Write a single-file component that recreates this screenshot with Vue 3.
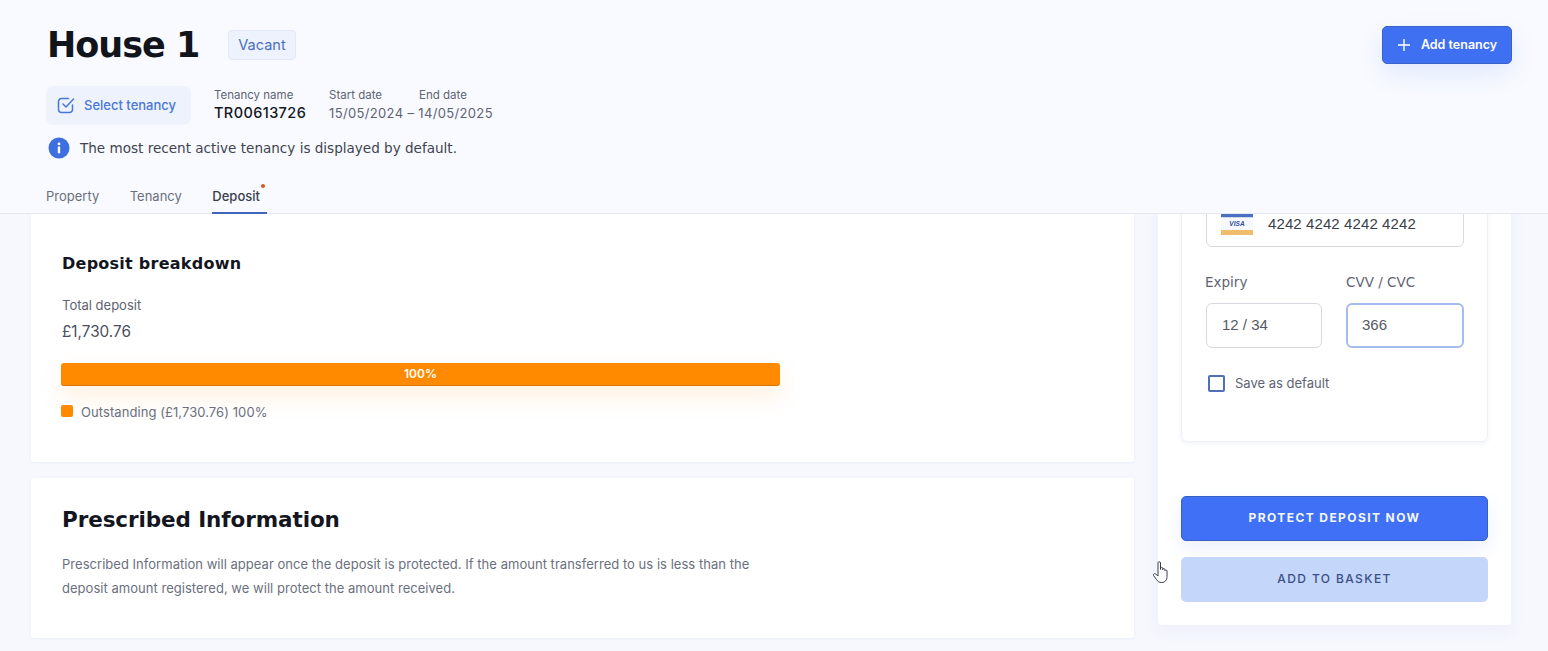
<script setup>
const tabs = [
  { label: 'Property', active: false },
  { label: 'Tenancy', active: false },
  { label: 'Deposit', active: true },
];
const paidPercent = 100;
</script>

<template>
  <div class="page">
    <header class="header">
      <div class="title-row">
        <div class="title-left">
          <h1 class="title">House 1</h1>
          <span class="badge">Vacant</span>
        </div>
        <button class="add-btn">
          <svg width="14" height="14" viewBox="0 0 14 14" fill="none" stroke="#fff" stroke-width="1.4">
            <path d="M7 1v12M1 7h12" />
          </svg>
          <span>Add tenancy</span>
        </button>
      </div>

      <div class="tenancy-row">
        <button class="select-btn">
          <svg width="18" height="18" viewBox="0 0 18 18" fill="none" stroke="#4a78d8" stroke-width="1.5" stroke-linecap="round" stroke-linejoin="round">
            <path d="M15.5 9v4.5a3 3 0 0 1-3 3h-8a3 3 0 0 1-3-3v-8a3 3 0 0 1 3-3h7" />
            <path d="M6 8l3 3 7.5-8" />
          </svg>
          <span>Select tenancy</span>
        </button>
        <div class="meta meta-name">
          <span class="meta-label">Tenancy name</span>
          <span class="meta-strong">TR00613726</span>
        </div>
        <div class="meta">
          <span class="date-labels"><span class="meta-label start-label">Start date</span><span class="meta-label">End date</span></span>
          <span class="meta-value">15/05/2024 – 14/05/2025</span>
        </div>
      </div>

      <div class="notice">
        <svg width="22" height="22" viewBox="0 0 22 22">
          <circle cx="11" cy="11" r="10.5" fill="#3d6fe0" />
          <rect x="9.8" y="9.6" width="2.4" height="6.6" rx="0.5" fill="#fff" />
          <circle cx="11" cy="6.9" r="1.4" fill="#fff" />
        </svg>
        <span>The most recent active tenancy is displayed by default.</span>
      </div>

      <nav class="tabs">
        <a v-for="tab in tabs" :key="tab.label" class="tab" :class="{ active: tab.active }">
          {{ tab.label }}
          <i v-if="tab.active" class="dot"></i>
        </a>
      </nav>
    </header>

    <main class="content">
      <div class="left">
        <section class="card breakdown">
          <h2 class="card-title">Deposit breakdown</h2>
          <div class="total-label">Total deposit</div>
          <div class="total-value">£1,730.76</div>
          <div class="bar">
            <div class="bar-fill" :style="{ width: paidPercent + '%' }">100%</div>
          </div>
          <div class="legend">
            <i class="swatch"></i>
            Outstanding (£1,730.76) 100%
          </div>
        </section>

        <section class="card prescribed">
          <h2 class="big-title">Prescribed Information</h2>
          <p class="copy">
            Prescribed Information will appear once the deposit is protected. If the amount transferred to us is less than the
            deposit amount registered, we will protect the amount received.
          </p>
        </section>
      </div>

      <aside class="right">
        <div class="panel">
          <div class="pay-card">
            <div class="field card-field">
              <svg class="visa" width="32" height="24" viewBox="0 0 32 24">
                <rect x="0" y="0" width="32" height="5.5" fill="#4a6fc0" />
                <rect x="0" y="5.5" width="32" height="12.5" fill="#f7f8fb" />
                <rect x="0" y="18" width="32" height="5" fill="#f0bd6c" />
                <text x="16" y="14" text-anchor="middle" font-size="6.5" font-weight="700" font-style="italic" font-family="Liberation Sans, sans-serif" fill="#2b4f9e">VISA</text>
              </svg>
              <span>4242 4242 4242 4242</span>
            </div>
            <div class="split">
              <div class="split-col">
                <label class="field-label">Expiry</label>
                <div class="field small">12 / 34</div>
              </div>
              <div class="split-col cvc">
                <label class="field-label">CVV / CVC</label>
                <div class="field small focused">366</div>
              </div>
            </div>
            <label class="save">
              <i class="check"></i>
              Save as default
            </label>
          </div>
          <button class="action primary">PROTECT DEPOSIT NOW</button>
          <button class="action secondary">ADD TO BASKET</button>
          <svg class="cursor" width="18" height="25" viewBox="0 0 18 25" fill="#fff" stroke="#3a3f4c" stroke-width="1" stroke-linejoin="round">
            <path d="M6 12V3a1.2 1.2 0 0 1 2.5 0v6.5l0-1a1.1 1.1 0 0 1 2.2 0v1.2a1.1 1.1 0 0 1 2.2 0v1a1.1 1.1 0 0 1 2.1.2v5.6c0 3.5-2 6-5.2 6-2.7 0-4-1-5.3-3L1.6 15.6c-.7-1.2.7-2.6 1.9-1.6L6 16z" />
          </svg>
        </div>
      </aside>
    </main>
  </div>
</template>

<style scoped>
.page {
  width: 1548px;
  height: 651px;
  overflow: hidden;
  background: #f6f8fe;
  font-family: Inter, Roboto, sans-serif;
  color: #14161f;
  display: flex;
  flex-direction: column;
}
.header {
  height: 214px;
  flex-shrink: 0;
  box-sizing: border-box;
  padding: 26px 36px 0 46px;
  border-bottom: 1px solid #e3e8f4;
  background: #f8faff;
}
.title-row {
  display: flex;
  justify-content: space-between;
  align-items: flex-start;
  height: 46px;
}
.title-left {
  display: flex;
  align-items: center;
  gap: 30px;
  padding-left: 1px;
}
.title {
  margin: 0;
  width: 151px;
  white-space: nowrap;
  font-family: "DejaVu Sans", Inter, sans-serif;
  font-size: 35px;
  line-height: 38px;
  font-weight: 700;
  letter-spacing: -1px;
  color: #12141c;
}
.badge {
  width: 68px;
  text-align: center;
  height: 30px;
  line-height: 27px;
  box-sizing: border-box;
  font-size: 14.5px;
  color: #4a6fc0;
  background: #edf2fd;
  border: 1px solid #e0e8fa;
  border-radius: 4px;
}
.add-btn {
  width: 130px;
  height: 38px;
  display: flex;
  align-items: center;
  justify-content: center;
  gap: 10px;
  border: 1px solid #3a62c8;
  border-radius: 5px;
  background: #3f70f2;
  color: #fff;
  font: 600 12.5px Inter, sans-serif;
  box-shadow: 0 10px 24px rgba(63, 112, 242, 0.12);
}
.add-btn span {
  margin-top: -2px;
}
.tenancy-row {
  display: flex;
  align-items: center;
  margin-top: 14px;
  height: 39px;
}
.select-btn {
  width: 145px;
  height: 39px;
  display: flex;
  align-items: center;
  gap: 9px;
  padding: 0 0 0 11px;
  border: none;
  border-radius: 7px;
  background: #edf2fd;
  color: #4a78d8;
  font: 500 13px Inter, sans-serif;
}
.select-btn span {
  margin-top: -1px;
}
.select-btn svg {
  margin-top: -1px;
}
.meta {
  display: flex;
  flex-direction: column;
  gap: 2px;
  margin-top: -1px;
}
.meta-name {
  margin-left: 23px;
  width: 115px;
}
.meta-label {
  font-size: 11.5px;
  line-height: 14px;
  color: #5e6473;
}
.date-labels {
  display: flex;
}
.start-label {
  width: 90px;
}
.meta-strong {
  font-size: 14.5px;
  line-height: 18px;
  font-weight: 500;
  letter-spacing: 0.4px;
  color: #15171f;
}
.meta-value {
  font-size: 13px;
  line-height: 18px;
  color: #5e6473;
  letter-spacing: 0.35px;
}
.notice {
  display: flex;
  align-items: center;
  gap: 10px;
  margin-top: 12px;
  padding-left: 2px;
  font-family: "DejaVu Sans", sans-serif;
  font-size: 13.55px;
  line-height: 22px;
  color: #3f4450;
}
.tabs {
  display: flex;
  gap: 30.5px;
  margin-top: 28px;
}
.tab {
  position: relative;
  font-size: 13px;
  line-height: 18px;
  padding-bottom: 7px;
  color: #6a707e;
}
.tab.active {
  font-weight: 500;
  color: #3a3f4c;
  padding-right: 7px;
  border-bottom: 2px solid #3f66b8;
  margin-right: -7px;
}
.dot {
  position: absolute;
  top: -3px;
  right: 2px;
  width: 4px;
  height: 4px;
  border-radius: 50%;
  background: #d9541e;
}
.content {
  flex: 1;
  min-height: 0;
  overflow: hidden;
  display: flex;
  gap: 24px;
  padding: 0 37px 0 31px;
}
.left {
  width: 1103px;
  flex-shrink: 0;
  display: flex;
  flex-direction: column;
  gap: 16px;
}
.card {
  background: #fff;
  box-sizing: border-box;
  padding-left: 31px;
  border-radius: 0 0 3px 3px;
  box-shadow: 0 1px 3px rgba(90, 110, 180, 0.08);
}
.breakdown {
  height: 248px;
  padding-top: 40px;
}
.card-title {
  margin: 0;
  font-family: "DejaVu Sans", Inter, sans-serif;
  font-size: 16px;
  line-height: 20px;
  font-weight: 700;
  letter-spacing: 0.25px;
  color: #14161f;
}
.total-label {
  margin-top: 23px;
  font-size: 13px;
  line-height: 16px;
  color: #5e6473;
}
.total-value {
  margin-top: 10px;
  font-size: 15.3px;
  line-height: 18px;
  color: #4a4f5c;
}
.bar {
  width: 719px;
  margin: 22px 0 0 -1px;
  height: 23px;
  border-radius: 3px;
  box-shadow: 0 10px 24px rgba(255, 140, 0, 0.14);
}
.bar-fill {
  height: 100%;
  border-radius: 3px;
  background: #ff8a00;
  box-shadow: inset 0 -1px 0 rgba(150, 90, 20, 0.4);
  color: #fff;
  font-size: 12px;
  font-weight: 600;
  line-height: 22px;
  text-align: center;
}
.legend {
  display: flex;
  align-items: center;
  gap: 8px;
  margin: 18px 0 0 -1px;
  font-size: 13px;
  line-height: 16px;
  letter-spacing: 0.07px;
  color: #6a707e;
}
.swatch {
  width: 12px;
  height: 12px;
  border-radius: 2px;
  background: #ff8a00;
  margin-top: -2px;
}
.prescribed {
  height: 160px;
  padding-top: 28px;
  border-radius: 3px;
}
.big-title {
  margin: 0;
  font-family: "DejaVu Sans", Inter, sans-serif;
  font-size: 21.5px;
  line-height: 28px;
  font-weight: 700;
  letter-spacing: -0.1px;
  color: #14161f;
}
.copy {
  width: 705px;
  margin: 18px 0 0;
  font-size: 13px;
  line-height: 24px;
  letter-spacing: 0.03px;
  color: #6a707e;
}
.right {
  width: 353px;
  flex-shrink: 0;
  display: flex;
  flex-direction: column;
  justify-content: flex-end;
  padding-bottom: 26px;
  box-sizing: border-box;
}
.panel {
  position: relative;
  flex-shrink: 0;
  background: #fff;
  border-radius: 4px;
  padding: 0 23px 23px;
  box-shadow: 0 6px 16px rgba(90, 110, 180, 0.06);
}
.pay-card {
  padding: 0 23px 49px 24px;
  border: 1px solid #eef1f8;
  border-top: none;
  border-radius: 0 0 6px 6px;
  margin-bottom: 54px;
  box-shadow: 0 2px 5px rgba(90, 110, 180, 0.08);
}
.field {
  box-sizing: border-box;
  border: 1px solid #d6d9e0;
  border-radius: 6px;
  color: #3a3f4c;
  font-family: "Liberation Sans", sans-serif;
  font-size: 15px;
}
.card-field {
  display: flex;
  align-items: center;
  gap: 15px;
  height: 50px;
  padding: 3px 0 0 14px;
  letter-spacing: 0.1px;
}
.split {
  display: flex;
  gap: 24px;
  margin-top: 26px;
}
.split-col {
  width: 116px;
}
.split-col.cvc {
  width: 118px;
}
.field-label {
  display: block;
  font-family: "DejaVu Sans", sans-serif;
  font-size: 13.5px;
  line-height: 18px;
  color: #5e6473;
  margin: 0 0 12px -1px;
}
.cvc .field-label {
  margin-left: 0;
}
.field.small {
  height: 45px;
  line-height: 41px;
  padding-left: 15px;
  color: #555a66;
}
.field.focused {
  border: 2px solid #a5bcec;
  line-height: 39px;
  padding-left: 14px;
}
.save {
  display: flex;
  align-items: center;
  gap: 10px;
  margin: 26px 0 0 2px;
  font-size: 13px;
  line-height: 18px;
  color: #5e6473;
}
.check {
  width: 17px;
  height: 17px;
  box-sizing: border-box;
  border: 2px solid #4d70b8;
  border-radius: 2px;
}
.action {
  display: block;
  width: 100%;
  height: 45px;
  padding-bottom: 3px;
  border-radius: 5px;
  font: 700 12px Inter, sans-serif;
  letter-spacing: 1.4px;
}
.primary {
  background: #3f70f5;
  border: 1px solid #3560c4;
  color: #f4f7ff;
  margin-bottom: 16px;
  box-shadow: 0 8px 18px rgba(63, 112, 242, 0.1);
}
.secondary {
  background: #c4d6fa;
  border: none;
  color: #3a4f86;
  font-weight: 500;
}
.cursor {
  position: absolute;
  left: -6px;
  bottom: 40px;
}
</style>

<style>
html,
body {
  margin: 0;
  background: #f6f8fe;
}
</style>
